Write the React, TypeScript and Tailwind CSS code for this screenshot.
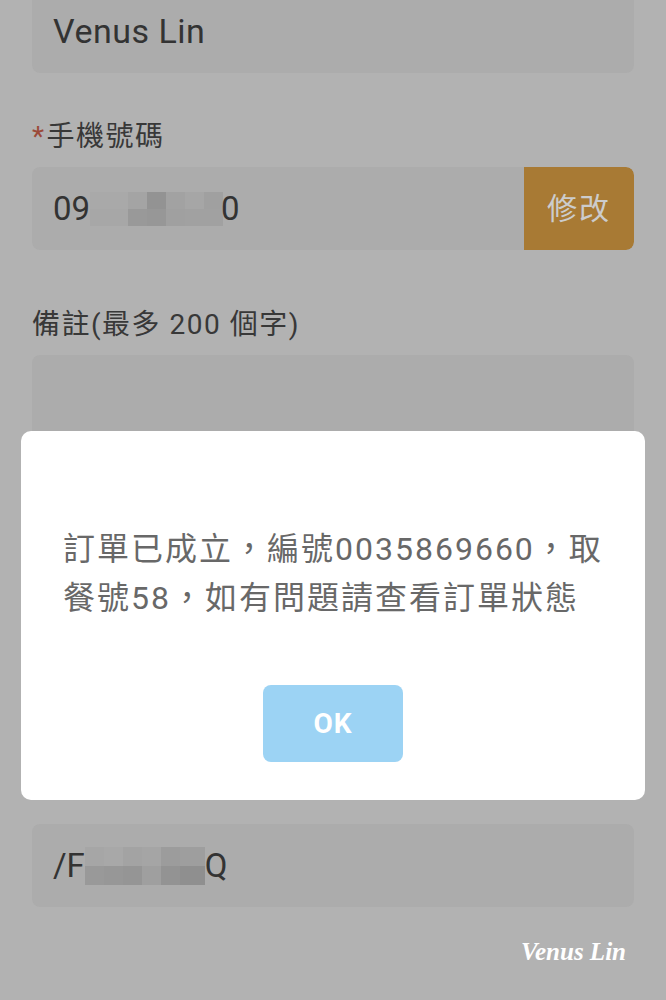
import React from 'react';

const SANS = "font-['Roboto','Noto_Sans_CJK_TC',sans-serif]";

// mosaic blocks covering private data
const PHONE_MOSAIC = [
  ['bg-[#a9a9a9]', 'bg-[#a4a4a4]', 'bg-[#939393]', 'bg-[#a2a2a2]', 'bg-[#a6a6a6]', 'bg-[#a0a0a0]'],
  ['bg-[#a7a7a7]', 'bg-[#999999]', 'bg-[#979797]', 'bg-[#a0a0a0]', 'bg-[#a1a1a1]', 'bg-[#a1a1a1]'],
];
const PHONE_COLS = ['w-[38px]', 'w-[19px]', 'w-[19px]', 'w-[19px]', 'w-[19px]', 'w-[19px]'];

const CARRIER_MOSAIC = [
  ['bg-[#a6a6a6]', 'bg-[#a8a8a8]', 'bg-[#a3a3a3]', 'bg-[#a5a5a5]', 'bg-[#9c9c9c]', 'bg-[#9e9e9e]'],
  ['bg-[#999999]', 'bg-[#979797]', 'bg-[#959595]', 'bg-[#9f9f9f]', 'bg-[#939393]', 'bg-[#8f8f8f]'],
];
const CARRIER_COLS = ['w-[19px]', 'w-[19px]', 'w-[19px]', 'w-[19px]', 'w-[19px]', 'w-[25px]'];

function Mosaic({ rows, cols, h }: { rows: string[][]; cols: string[]; h: string }) {
  return (
    <div className="flex flex-col">
      {rows.map((row, r) => (
        <div key={r} className={`flex ${h}`}>
          {row.map((c, i) => (
            <div key={i} className={`${c} ${cols[i]}`} />
          ))}
        </div>
      ))}
    </div>
  );
}

function Label({ children, required }: { children: React.ReactNode; required?: boolean }) {
  return (
    <div className="text-[28px] leading-[36px] tracking-[1.5px] text-[#383838]">
      {required && <span className="text-[#9b4a3a] mr-[1px]">*</span>}
      {children}
    </div>
  );
}

export default function App() {
  return (
    <div className={`relative h-[1000px] w-full overflow-hidden bg-[#b2b2b2] ${SANS}`}>
      <div className="flex flex-col px-[32px]">
        {/* name */}
        <div className="-mt-[10px] h-[83px] rounded-[8px] bg-[#acacac] flex items-center pl-[21px]">
          <span className="text-[34px] tracking-[0.5px] text-[#333333]">Venus Lin</span>
        </div>

        {/* phone */}
        <div className="mt-[46px]">
          <Label required>手機號碼</Label>
        </div>
        <div className="mt-[12px] h-[83px] rounded-[8px] bg-[#acacac] flex items-center overflow-hidden">
          <div className="flex-1 flex items-center pl-[21px] text-[33px] text-[#333333]">
            <span>09</span>
            <Mosaic rows={PHONE_MOSAIC} cols={PHONE_COLS} h="h-[17px]" />
            <span className="-ml-[2px]">0</span>
          </div>
          <button className="h-full w-[110px] bg-[#a87a34] text-[30px] tracking-[2px] text-[#cccccc] rounded-r-[8px]">
            修改
          </button>
        </div>

        {/* note */}
        <div className="mt-[57px]">
          <Label>備註(最多 200 個字)</Label>
        </div>
        <div className="mt-[12px] h-[360px] rounded-[8px] bg-[#acacac]" />

        {/* carrier */}
        <div className="mt-[109px] h-[83px] rounded-[8px] bg-[#acacac] flex items-center pl-[21px] text-[33px] text-[#333333]">
          <span>/F</span>
          <Mosaic rows={CARRIER_MOSAIC} cols={CARRIER_COLS} h="h-[19px]" />
          <span>Q</span>
        </div>

        <div className="mt-[26px] flex justify-end pr-[8px]">
          <span className="font-['Liberation_Serif',serif] italic font-bold text-[25px] text-white">
            Venus Lin
          </span>
        </div>
      </div>

      {/* dialog */}
      <div className="absolute left-[21px] right-[21px] top-[431px] h-[369px] rounded-[10px] bg-white flex flex-col items-center">
        <p className="mt-[94px] w-full px-[42px] text-[32px] leading-[49px] tracking-[2px] text-[#686868]">
          訂單已成立，編號0035869660，取餐號58，如有問題請查看訂單狀態
        </p>
        <button className="mt-[62px] h-[77px] w-[140px] rounded-[8px] bg-[#9cd3f4] text-[28px] font-bold tracking-[1px] text-white">
          OK
        </button>
      </div>
    </div>
  );
}
